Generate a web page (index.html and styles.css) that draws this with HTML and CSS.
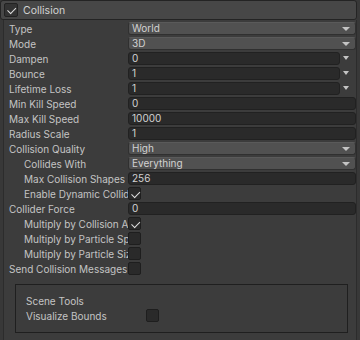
FILE: index.html
```html
<!DOCTYPE html>
<html lang="en">

<head>
    <meta charset="UTF-8" />
    <meta name="viewport" content="width=device-width, initial-scale=1.0" />
    <title>Collision</title>
    <link rel="stylesheet" href="styles.css">
</head>

<body>
    <div class="module">
        <div class="module-title">
            <span class="toggle checked"></span>
            <span class="title-text">Collision</span>
        </div>
        <div class="module-body">
            <div class="row"><span class="label">Type</span><div class="popup">World</div></div>
            <div class="row"><span class="label">Mode</span><div class="popup">3D</div></div>
            <div class="row"><span class="label">Dampen</span><div class="curve"><div class="field">0</div><span class="arrow"></span></div></div>
            <div class="row"><span class="label">Bounce</span><div class="curve"><div class="field">1</div><span class="arrow"></span></div></div>
            <div class="row"><span class="label">Lifetime Loss</span><div class="curve"><div class="field">1</div><span class="arrow"></span></div></div>
            <div class="row"><span class="label">Min Kill Speed</span><div class="field">0</div></div>
            <div class="row"><span class="label">Max Kill Speed</span><div class="field">10000</div></div>
            <div class="row"><span class="label">Radius Scale</span><div class="field">1</div></div>
            <div class="row"><span class="label">Collision Quality</span><div class="popup">High</div></div>
            <div class="row sub"><span class="label">Collides With</span><div class="popup">Everything</div></div>
            <div class="row sub"><span class="label">Max Collision Shapes</span><div class="field">256</div></div>
            <div class="row sub"><span class="label">Enable Dynamic Colliders</span><span class="toggle checked"></span></div>
            <div class="row"><span class="label">Collider Force</span><div class="field">0</div></div>
            <div class="row sub"><span class="label">Multiply by Collision Angle</span><span class="toggle checked"></span></div>
            <div class="row sub"><span class="label">Multiply by Particle Speed</span><span class="toggle"></span></div>
            <div class="row sub"><span class="label">Multiply by Particle Size</span><span class="toggle"></span></div>
            <div class="row"><span class="label">Send Collision Messages</span><span class="toggle"></span></div>

            <div class="scene-tools">
                <div class="tools-row">Scene Tools</div>
                <div class="tools-row"><span class="tools-label">Visualize Bounds</span><span class="toggle"></span></div>
            </div>
        </div>
    </div>
</body>

</html>
```

FILE: styles.css
```css
body {
    margin: 0;
    background-color: #383838;
    font-family: Inter, "Noto Sans", sans-serif;
    font-size: 10px;
    color: #c4c4c4;
}

.module {
    width: 357px;
}

.module-title {
    height: 18px;
    display: flex;
    align-items: center;
    padding-left: 3px;
    background-color: #474747;
    border: 1px solid #242424;
    border-radius: 3px;
}

.title-text {
    margin-left: 5px;
    color: #d2d2d2;
    font-size: 10.5px;
}

.module-body {
    margin-left: 3px;
    padding: 1px 0 9px 5px;
    background-color: #3c3c3c;
    border-left: 1px solid #2c2c2c;
    border-right: 1px solid #2c2c2c;
}

.row {
    height: 15px;
    display: flex;
    align-items: center;
}

.label {
    width: 119px;
    flex-shrink: 0;
    white-space: nowrap;
    overflow: hidden;
}

.row.sub .label {
    padding-left: 15px;
    width: 104px;
}

.popup {
    flex: 1;
    height: 11px;
    line-height: 11px;
    padding-left: 3px;
    position: relative;
    background-color: #515151;
    border: 1px solid #303030;
    border-top-color: #5a5a5a;
    border-radius: 3px;
    color: #d2d2d2;
}

.popup::after {
    content: "";
    position: absolute;
    right: 5px;
    top: 4px;
    border-left: 4px solid transparent;
    border-right: 4px solid transparent;
    border-top: 4px solid #c4c4c4;
}

.field {
    flex: 1;
    height: 11px;
    line-height: 11px;
    padding-left: 3px;
    background-color: #2a2a2a;
    border: 1px solid #212121;
    border-radius: 3px;
    color: #d2d2d2;
}

.curve {
    flex: 1;
    display: flex;
    align-items: center;
}

.curve .arrow {
    width: 16px;
    height: 13px;
    position: relative;
}

.curve .arrow::after {
    content: "";
    position: absolute;
    left: 3px;
    top: 4px;
    border-left: 3.5px solid transparent;
    border-right: 3.5px solid transparent;
    border-top: 4px solid #c4c4c4;
}

.toggle {
    width: 11px;
    height: 11px;
    flex-shrink: 0;
    background-color: #2a2a2a;
    border: 1px solid #1e1e1e;
    border-radius: 2px;
    position: relative;
}

.module-title .toggle {
    width: 12px;
    height: 12px;
    background-color: #333333;
    border-color: #222222;
}

.toggle.checked::after {
    content: "";
    position: absolute;
    left: 2px;
    top: 1px;
    width: 7px;
    height: 4px;
    border-left: 1.5px solid #e0e0e0;
    border-bottom: 1.5px solid #e0e0e0;
    transform: rotate(-45deg) translate(-1px, 2px);
}

.scene-tools {
    margin: 8px 8px 0 6px;
    padding: 8px 10px 9px;
    border: 1px solid #1f1f1f;
}

.tools-row {
    height: 15px;
    display: flex;
    align-items: center;
}

.tools-label {
    width: 120px;
}
```
